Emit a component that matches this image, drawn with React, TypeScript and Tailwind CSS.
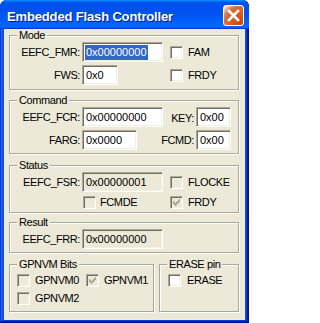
import type { ReactNode } from 'react'

// classic sunken edge used by text boxes and check boxes
const sunken =
  'border border-t-[#ACA899] border-l-[#ACA899] border-b-white border-r-white shadow-[inset_1px_1px_0_#716F64,inset_-1px_-1px_0_#F1EFE2]'

function Label({ children, className = 'w-[70px]' }: { children: ReactNode; className?: string }) {
  return (
    <span className={`flex shrink-0 justify-end whitespace-nowrap tracking-[-0.4px] ${className}`}>
      {children}
    </span>
  )
}

function Field({
  value,
  className,
  readOnly = false,
  selected = false,
}: {
  value: string
  className: string
  readOnly?: boolean
  selected?: boolean
}) {
  return (
    <div
      className={`flex h-[20px] shrink-0 items-center pl-[2px] ${sunken} ${
        readOnly ? 'bg-[#ECE9D8]' : 'bg-white'
      } ${className}`}
    >
      {selected ? (
        <span className="h-[15px] bg-[#316AC5] px-[1px] leading-[15px] text-white">{value}</span>
      ) : (
        <span className="pl-[1px]">{value}</span>
      )}
    </div>
  )
}

function Check({ checked = false, disabled = false }: { checked?: boolean; disabled?: boolean }) {
  return (
    <span
      className={`flex h-[13px] w-[13px] shrink-0 items-center justify-center ${sunken} ${
        disabled ? 'bg-[#ECE9D8]' : 'bg-white'
      }`}
    >
      {checked && (
        <svg width="7" height="7" viewBox="0 0 7 7" shapeRendering="crispEdges" fill={disabled ? '#ACA899' : '#000'}>
          <path d="M0 2h1v3H0zM1 3h1v3H1zM2 4h1v3H2zM3 3h1v3H3zM4 2h1v3H4zM5 1h1v3H5zM6 0h1v3H6z" />
        </svg>
      )}
    </span>
  )
}

function Group({ title, className, children }: { title: string; className: string; children: ReactNode }) {
  return (
    <div className={`relative border border-[#ACA899] shadow-[1px_1px_0_#fff,inset_1px_1px_0_#fff] ${className}`}>
      <span className="absolute left-[7px] top-[-7px] bg-[#ECE9D8] px-[2px] tracking-[-0.4px]">{title}</span>
      {children}
    </div>
  )
}

export default function App() {
  return (
    <div className="h-[323px] w-[249px] bg-white">
      <div className="flex h-[323px] w-[249px] flex-col overflow-hidden rounded-t-[7px] bg-[#0855DD] font-['Liberation_Sans',Arial,sans-serif] text-[11px] leading-[13px] text-black shadow-[inset_-1px_-1px_#00138c,inset_1px_1px_#0831d9,inset_-2px_-2px_#001ea0,inset_2px_2px_#166aee,inset_-3px_-3px_#003bda,inset_3px_3px_#0855dd]">
        {/* Title bar */}
        <div className="flex h-[29px] shrink-0 items-center bg-[linear-gradient(180deg,#0997ff,#0053ee_8%,#0050ee_40%,#06f_88%,#06f_93%,#005bff_95%,#003dd7_96%,#003dd7)] pl-[7px] pr-[5px]">
          <span className="flex-1 pt-[4px] text-[13px] font-bold leading-[16px] tracking-[-0.15px] text-white [text-shadow:1px_1px_#0a1883]">
            Embedded Flash Controller
          </span>
          <button className="mt-[1px] flex h-[21px] w-[21px] items-center justify-center rounded-[3px] border border-white bg-[radial-gradient(circle_at_90%_90%,#cc4600_0%,#dc6527_55%,#cd7546_70%,#ffccb2_90%,#fff_100%)]">
            <svg width="19" height="19" viewBox="0 0 19 19">
              <path d="M5 5L14 14M14 5L5 14" stroke="#fff" strokeWidth="2.6" strokeLinecap="square" />
            </svg>
          </button>
        </div>

        {/* Dialog body */}
        <div className="mx-[4px] h-[291px] shrink-0 bg-[#ECE9D8] pl-[5px] pt-[6px]">
          <Group title="Mode" className="w-[230px] pb-[4px] pt-[6px]">
            <div className="flex items-center">
              <Label>EEFC_FMR:</Label>
              <div className="ml-[2px] w-[88px] shrink-0">
                <Field value="0x00000000" className="w-[81px]" selected />
              </div>
              <Check />
              <span className="ml-[5px] tracking-[-0.4px]">FAM</span>
            </div>
            <div className="mt-[3px] flex items-center">
              <Label>FWS:</Label>
              <div className="ml-[2px] w-[88px] shrink-0">
                <Field value="0x0" className="w-[36px]" />
              </div>
              <Check />
              <span className="ml-[5px] tracking-[-0.4px]">FRDY</span>
            </div>
          </Group>

          <Group title="Command" className="mt-[10px] w-[230px] pb-[3px] pt-[6px]">
            <div className="flex items-center">
              <Label>EEFC_FCR:</Label>
              <div className="ml-[2px] w-[81px] shrink-0">
                <Field value="0x00000000" className="w-[81px]" />
              </div>
              <Label className="w-[31px] pt-[2px]">KEY:</Label>
              <Field value="0x00" className="ml-[2px] w-[35px]" />
            </div>
            <div className="mt-[3px] flex items-center">
              <Label>FARG:</Label>
              <div className="ml-[2px] w-[81px] shrink-0">
                <Field value="0x0000" className="w-[55px]" />
              </div>
              <Label className="w-[31px]">FCMD:</Label>
              <Field value="0x00" className="ml-[2px] w-[35px]" />
            </div>
          </Group>

          <Group title="Status" className="mt-[11px] w-[230px] pb-[3px] pt-[6px]">
            <div className="flex items-center">
              <Label>EEFC_FSR:</Label>
              <div className="ml-[2px] w-[88px] shrink-0">
                <Field value="0x00000001" className="w-[81px]" readOnly />
              </div>
              <Check disabled />
              <span className="ml-[5px] tracking-[-0.4px]">FLOCKE</span>
            </div>
            <div className="mt-[4px] flex items-center pl-[73px]">
              <div className="flex w-[87px] shrink-0 items-center">
                <Check disabled />
                <span className="ml-[4px] tracking-[-0.4px]">FCMDE</span>
              </div>
              <Check disabled checked />
              <span className="ml-[5px] tracking-[-0.4px]">FRDY</span>
            </div>
          </Group>

          <Group title="Result" className="mt-[9px] w-[230px] pb-[3px] pt-[6px]">
            <div className="flex items-center">
              <Label>EEFC_FRR:</Label>
              <Field value="0x00000000" className="ml-[2px] w-[81px]" readOnly />
            </div>
          </Group>

          <div className="mt-[11px] flex w-[230px]">
            <Group title="GPNVM Bits" className="w-[145px] pb-[6px] pl-[7px] pt-[9px]">
              <div className="flex items-center">
                <div className="flex w-[69px] shrink-0 items-center">
                  <Check disabled />
                  <span className="ml-[5px] tracking-[-0.4px]">GPNVM0</span>
                </div>
                <Check disabled checked />
                <span className="ml-[5px] tracking-[-0.4px]">GPNVM1</span>
              </div>
              <div className="mt-[5px] flex items-center">
                <Check disabled />
                <span className="ml-[5px] tracking-[-0.4px]">GPNVM2</span>
              </div>
            </Group>
            <Group title="ERASE pin" className="ml-[5px] w-[80px] pl-[8px] pt-[9px]">
              <div className="flex items-center">
                <Check />
                <span className="ml-[6px] tracking-[-0.4px]">ERASE</span>
              </div>
            </Group>
          </div>
        </div>
      </div>
    </div>
  )
}
